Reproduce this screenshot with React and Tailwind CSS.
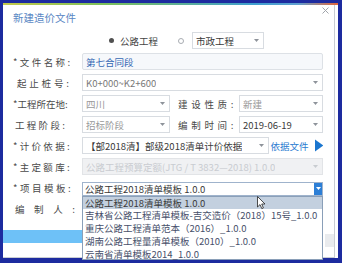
import React from "react";

function Arrow({ color = "#8e939a" }) {
  return (
    <svg width="5" height="3" viewBox="0 0 5 3" className="shrink-0">
      <path d="M0 0H5L2.5 3Z" fill={color} />
    </svg>
  );
}

function Box({ className = "", children, arrow = true, arrowColor, text = "text-[#3a3a3a]" }) {
  return (
    <div
      className={`flex items-center justify-between h-[17px] border border-[#d8dce1] pl-[3px] pr-[4px] ${className}`}
    >
      <span className={`whitespace-nowrap overflow-hidden ${text}`}>{children}</span>
      {arrow && <Arrow color={arrowColor} />}
    </div>
  );
}

function Label({ children, className = "" }) {
  return (
    <div className={`w-[69px] shrink-0 whitespace-nowrap text-[#4a4a4a] ${className}`}>{children}</div>
  );
}

export default function App() {
  return (
    <div className="w-[342px] h-[263px] bg-[#1d2b9f] pt-[3px] pl-[3px] font-['Noto_Sans_CJK_SC',sans-serif] text-[9.5px] leading-[12px] overflow-hidden">
      <div className="w-[335px] h-[255px] bg-white flex flex-col">
        <div className="h-[2px] bg-[linear-gradient(90deg,#c4c94a_0%,#7cc05a_30%,#3f9fd0_75%,#5fa0d0_88%,#e3653a_100%)]" />
        <div className="relative w-[332px] h-[253px] border-r border-b border-[#c9cdd3] flex flex-col pl-[10px] pr-[11px]">
          {/* title */}
          <div className="h-[26px] flex justify-between items-start">
            <div className="mt-[6px] text-[10.5px] leading-[14px] text-[#5a87c4]">新建造价文件</div>
            <svg width="7" height="7" viewBox="0 0 7 7" className="mt-[2px] mr-[-6px]">
              <path d="M0.5 0.5L6.5 6.5M6.5 0.5L0.5 6.5" stroke="#a0a4aa" strokeWidth="1" />
            </svg>
          </div>

          {/* radio row */}
          <div className="h-[17px] mt-[1px] flex items-center pl-[96px]">
            <div className="w-[5px] h-[5px] rounded-full bg-[#505050]" />
            <span className="ml-[6px] text-[#444]">公路工程</span>
            <div className="ml-[20px] w-[6px] h-[6px] rounded-full border border-[#a8acb2]" />
            <Box className="ml-[8px] w-[72px]">市政工程</Box>
          </div>

          <div className="flex flex-col gap-[4px] mt-[4px]">
            <div className="flex items-center h-[17px]">
              <Label className="tracking-[2.4px]">*文件名称:</Label>
              <div className="flex items-center h-[17px] w-[241px] border border-[#dde1e6] bg-[#f6f8fb] rounded-[2px] pl-[3px] text-[#3568b4]">
                第七合同段
              </div>
            </div>
            <div className="flex items-center h-[17px]">
              <Label className="tracking-[2.8px] pl-[4px]">起止桩号:</Label>
              <Box className="w-[241px]" text="text-[#777]">K0+000~K2+600</Box>
            </div>
            <div className="flex items-center h-[17px]">
              <Label>*工程所在地:</Label>
              <Box className="w-[88px]" text="text-[#999]">四川</Box>
              <div className="ml-[8px] w-[61px] tracking-[3.7px] text-[#4a4a4a] whitespace-nowrap">建设性质:</div>
              <Box className="w-[84px]" text="text-[#999]">新建</Box>
            </div>
            <div className="flex items-center h-[17px]">
              <Label className="tracking-[2.3px] pl-[2px]">工程阶段:</Label>
              <Box className="w-[88px]" text="text-[#999]">招标阶段</Box>
              <div className="ml-[8px] w-[61px] tracking-[3.7px] text-[#4a4a4a] whitespace-nowrap">编制时间:</div>
              <Box className="w-[84px]" text="text-[#3a3a3a]">2019-06-19</Box>
            </div>
            <div className="flex items-center h-[17px]">
              <Label className="tracking-[2.3px]">*计价依据:</Label>
              <Box className="w-[199px]" text="text-[#3a3a3a]">【部2018清】部级2018清单计价依据</Box>
              <span className="ml-[2px] text-[#2b7bd0] whitespace-nowrap">依据文件</span>
              <svg width="9" height="13" viewBox="0 0 9 13" className="ml-[6px]">
                <path d="M0 0L9 6.5L0 13Z" fill="#1b76cf" />
              </svg>
            </div>
            <div className="flex items-center h-[17px]">
              <Label className="tracking-[2.3px]">*主定额库:</Label>
              <Box className="w-[241px] bg-[#f0f1f3] border-[#e2e4e7]" text="text-[#c9ccd1]" arrowColor="#c8ccd0">
                公路工程预算定额(JTG / T 3832—2018) 1.0.0
              </Box>
            </div>
            <div className="flex items-center h-[17px]">
              <Label className="tracking-[2.5px]">*项目模板:</Label>
              <div className="relative flex items-center justify-between h-[14px] w-[241px] border border-[#9fb3cc] pl-[2px] mt-[2px]">
                <span className="whitespace-nowrap text-[#3a3a3a]">公路工程2018清单模板 1.0.0</span>
                <div className="w-[8px] h-[12px] bg-[#2d7fd6] flex items-center justify-center">
                  <Arrow color="#ffffff" />
                </div>
                {/* dropdown list */}
                <div className="absolute left-[-1px] top-[13px] w-[241px] h-[64px] bg-white border border-[#8a9fb8] flex flex-col text-[#47506a] z-10">
                  <div className="h-[12px] bg-[#c3d0df] pl-[2px] leading-[12px] text-[#3a3a3a] whitespace-nowrap">公路工程2018清单模板 1.0.0</div>
                  <div className="h-[13px] pl-[2px] leading-[13px] whitespace-nowrap">吉林省公路工程清单模板-吉交造价（2018）15号_1.0.0</div>
                  <div className="h-[13px] pl-[2px] leading-[13px] whitespace-nowrap">重庆公路工程清单范本（2016）_1.0.0</div>
                  <div className="h-[13px] pl-[2px] leading-[13px] whitespace-nowrap">湖南公路工程量清单模板（2010）_1.0.0</div>
                  <div className="h-[12px] pl-[2px] leading-[12px] whitespace-nowrap">云南省清单模板2014_1.0.0</div>
                  <svg width="10" height="14" viewBox="0 0 10 14" className="absolute left-[174px] top-[-1px]">
                    <path d="M0.5 0.5V11L3 8.6L4.8 12.6L6.4 11.9L4.7 8H8Z" fill="#fff" stroke="#222" strokeWidth="0.8" strokeLinejoin="round" />
                  </svg>
                </div>
              </div>
            </div>
            <div className="flex items-center h-[17px]">
              <div className="w-[62px] shrink-0 pl-[2px] flex justify-between text-[#4a4a4a]">
                <span>编</span>
                <span>制</span>
                <span>人</span>
                <span>:</span>
              </div>
            </div>
          </div>
          <div className="mt-[13px] ml-[-10px] w-[79px] h-[13px] bg-[#6ec1f7]" />
          <div className="absolute right-[0px] top-[229px] w-[9px] h-[13px] bg-[#e9ebee]" />
        </div>
      </div>
    </div>
  );
}
